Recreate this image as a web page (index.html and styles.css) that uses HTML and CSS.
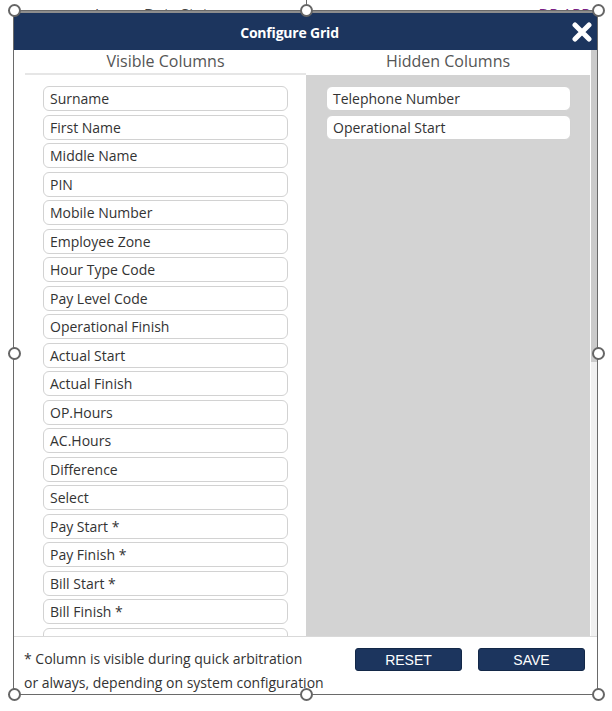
FILE: index.html
```html
<!DOCTYPE html>
<html lang="en">
<head>
<meta charset="utf-8">
<title>Configure Grid</title>
<link rel="stylesheet" href="styles.css">
</head>
<body>
<div class="page">
  <div class="backdrop">
    <span class="bg-label">Ignore Duty Status</span>
    <span class="bg-link">DR ARR</span>
  </div>

  <div class="dialog">
    <div class="dlg-header">
      <div class="dlg-title">Configure Grid</div>
      <button class="dlg-close" aria-label="Close">
        <svg width="20" height="20" viewBox="0 0 20 20"><path d="M3 3 L17 17 M17 3 L3 17" stroke="#fff" stroke-width="5" stroke-linecap="round" fill="none"/></svg>
      </button>
    </div>

    <div class="dlg-body">
      <div class="scroll-content">
        <div class="col-grid">
          <div class="col-head visible-head">Visible Columns</div>
          <div class="col-head hidden-head">Hidden Columns</div>
          <div class="col-list visible-list">
            <div class="item">Surname</div>
            <div class="item">First Name</div>
            <div class="item">Middle Name</div>
            <div class="item">PIN</div>
            <div class="item">Mobile Number</div>
            <div class="item">Employee Zone</div>
            <div class="item">Hour Type Code</div>
            <div class="item">Pay Level Code</div>
            <div class="item">Operational Finish</div>
            <div class="item">Actual Start</div>
            <div class="item">Actual Finish</div>
            <div class="item">OP.Hours</div>
            <div class="item">AC.Hours</div>
            <div class="item">Difference</div>
            <div class="item">Select</div>
            <div class="item">Pay Start *</div>
            <div class="item">Pay Finish *</div>
            <div class="item">Bill Start *</div>
            <div class="item">Bill Finish *</div>
            <div class="item"></div>
          </div>
          <div class="col-list hidden-list">
            <div class="item">Telephone Number</div>
            <div class="item">Operational Start</div>
          </div>
        </div>
      </div>
      <div class="scrollbar"><div class="thumb"></div></div>
    </div>

    <div class="dlg-footer">
      <p class="note">* Column is visible during quick arbitration<br>or always, depending on system configuration</p>
      <div class="actions">
        <button class="btn">RESET</button>
        <button class="btn">SAVE</button>
      </div>
    </div>
  </div>

  <div class="frame"></div>
  <div class="rot-line"></div>
  <div class="handle h-tl"></div>
  <div class="handle h-tm"></div>
  <div class="handle h-tr"></div>
  <div class="handle h-ml"></div>
  <div class="handle h-mr"></div>
  <div class="handle h-bl"></div>
  <div class="handle h-bm"></div>
  <div class="handle h-br"></div>
</div>
</body>
</html>
```

FILE: styles.css
```css
* { box-sizing: border-box; }

html, body {
  margin: 0;
  padding: 0;
  background: #ffffff;
}

body {
  font-family: "Open Sans", "Noto Sans", sans-serif;
  color: #333;
}

.page {
  position: relative;
  width: 612px;
  height: 711px;
  overflow: hidden;
}

/* underlying page content, mostly hidden by the dialog */
.backdrop {
  display: flex;
  padding: 6px 0 0 95px;
  font-size: 15px;
  line-height: 15px;
}
.bg-label { color: #444; }
.bg-link { color: #7a1f86; margin-left: 314px; }

/* dialog */
.dialog {
  position: absolute;
  left: 13px;
  top: 11px;
  width: 585px;
  height: 683px;
  border-top: 2px solid #8d8d8d;
  background: #fff;
  display: flex;
  flex-direction: column;
}

.dlg-header {
  height: 37px;
  background: #1c355e;
  display: flex;
  align-items: center;
  flex-shrink: 0;
}
.dlg-title {
  flex: 1;
  text-align: center;
  color: #fff;
  font-weight: 700;
  font-size: 14px;
  letter-spacing: -0.2px;
  padding-top: 2px;
}
.dlg-close {
  width: 32px;
  height: 37px;
  border: 0;
  background: transparent;
  padding: 0 6px 0 0;
  display: flex;
  align-items: center;
  justify-content: flex-end;
}
.dlg-close svg { display: block; }

.dlg-body {
  height: 586px;
  display: flex;
  flex-shrink: 0;
}
.scroll-content {
  flex: 1;
  overflow: hidden;
  padding-left: 12px;
}
.col-grid {
  display: grid;
  grid-template-columns: 281px 284px;
  grid-template-rows: 25px 561px;
}
.col-head {
  font-size: 16px;
  line-height: 23px;
  text-align: center;
  color: #555;
  background: #fff;
}
.visible-head { border-bottom: 2px solid #e6e6e6; }

.col-list { padding-top: 11px; overflow: hidden; }
.visible-list { padding-left: 18px; padding-right: 18px; background: #fff; }
.hidden-list { padding-left: 20px; padding-right: 19px; background: #d3d3d3; }

.item {
  height: 25px;
  margin-bottom: 3.5px;
  border: 1px solid #d2d2d2;
  border-radius: 6px;
  background: #fff;
  padding: 0 6px;
  font-size: 14px;
  line-height: 23px;
  color: #333;
  white-space: nowrap;
}

.scrollbar {
  width: 7px;
  background: #f0f0f0;
  flex-shrink: 0;
}
.thumb {
  height: 312px;
  background: #cbcbcb;
}

.dlg-footer {
  flex: 1;
  border-top: 1px solid #d9d9d9;
  display: flex;
  justify-content: space-between;
  align-items: flex-start;
  padding: 0 13px 0 11px;
}
.note {
  margin: 10px 0 0;
  font-size: 14px;
  line-height: 24px;
  color: #333;
}
.actions {
  display: flex;
  gap: 16px;
  margin-top: 11px;
}
.btn {
  width: 107px;
  height: 23px;
  background: #1c355e;
  border: 1px solid #132848;
  border-radius: 3px;
  color: #fff;
  font-family: "Liberation Sans", Arial, sans-serif;
  font-size: 14px;
  padding: 0;
}

/* selection frame + handles (design tool overlay) */
.frame {
  position: absolute;
  left: 13px;
  top: 10px;
  width: 585px;
  height: 685px;
  border: 1px solid #6a6a6a;
  pointer-events: none;
}
.rot-line {
  position: absolute;
  left: 306px;
  top: 0;
  width: 1px;
  height: 6px;
  background: #6a6a6a;
}
.handle {
  position: absolute;
  width: 13px;
  height: 13px;
  margin: -6px 0 0 -6px;
  border: 2px solid #666;
  border-radius: 50%;
  background: #fff;
}
.h-tl { left: 14px; top: 10px; }
.h-tm { left: 306px; top: 10px; }
.h-tr { left: 598px; top: 10px; }
.h-ml { left: 14px; top: 353px; }
.h-mr { left: 598px; top: 353px; }
.h-bl { left: 14px; top: 694px; }
.h-bm { left: 306px; top: 694px; }
.h-br { left: 598px; top: 694px; }
```
